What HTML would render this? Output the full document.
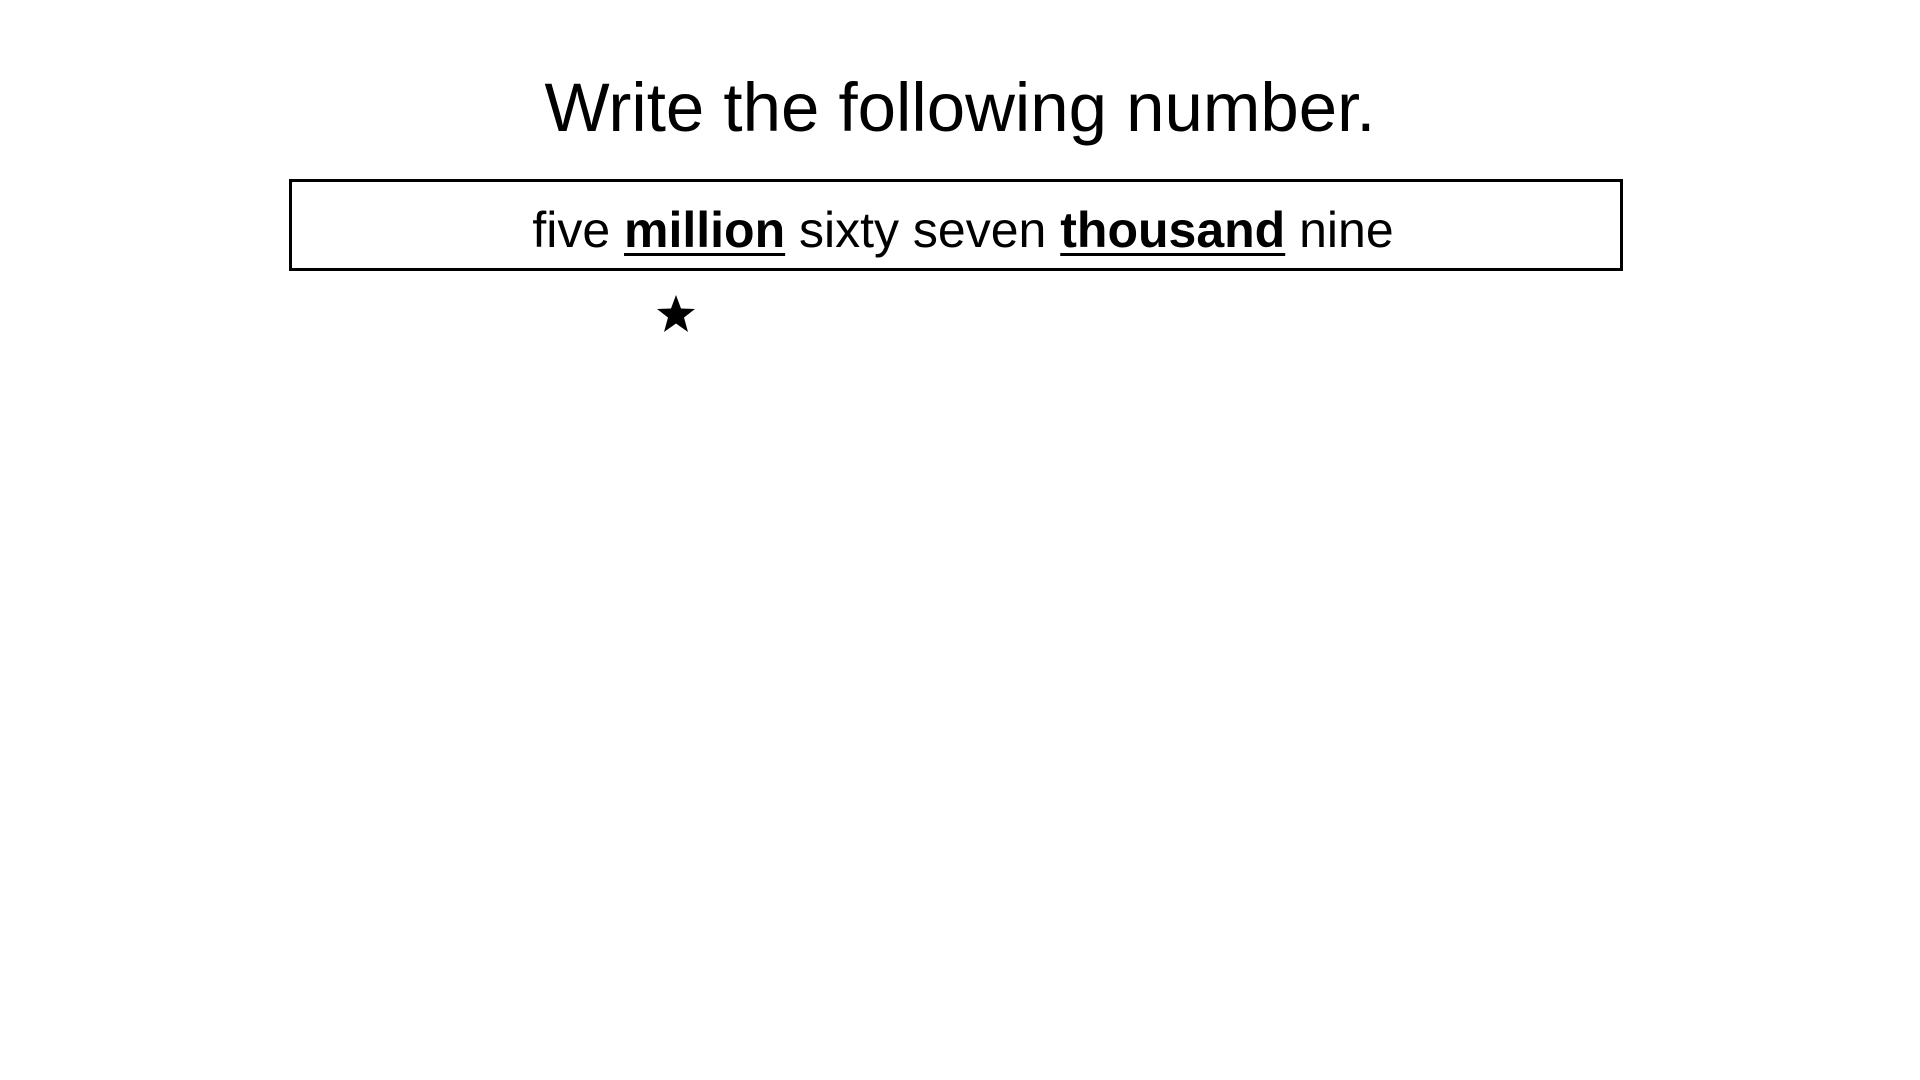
<!DOCTYPE html>
<html><head><meta charset="utf-8"><style>
body{margin:0;width:1920px;height:1080px;background:#fff;position:relative;overflow:hidden;font-family:"Liberation Sans",sans-serif;color:#000}
.t{position:absolute;left:0;width:1920px;top:66px;text-align:center;font-size:69px;line-height:84px;white-space:nowrap}
.box{position:absolute;left:289px;top:179px;width:1328px;height:86px;border:3px solid #000;box-sizing:content-box}
.s{position:absolute;left:0;width:1926px;top:200px;text-align:center;font-size:50px;line-height:60px;white-space:nowrap}
.s b{text-decoration:underline;text-decoration-thickness:3px;text-underline-offset:6px}
svg{position:absolute;left:656px;top:294px}
</style></head><body>
<div class="t">Write the following number.</div>
<div class="box"></div>
<div class="s">five <b>million</b> sixty seven <b>thousand</b> nine</div>
<svg width="40" height="40" viewBox="0 0 40 40"><polygon points="20,1 25,14.5 39,15 28,23.5 32,38 20,29.5 8,38 12,23.5 1,15 15,14.5" fill="#000"/></svg>
</body></html>
